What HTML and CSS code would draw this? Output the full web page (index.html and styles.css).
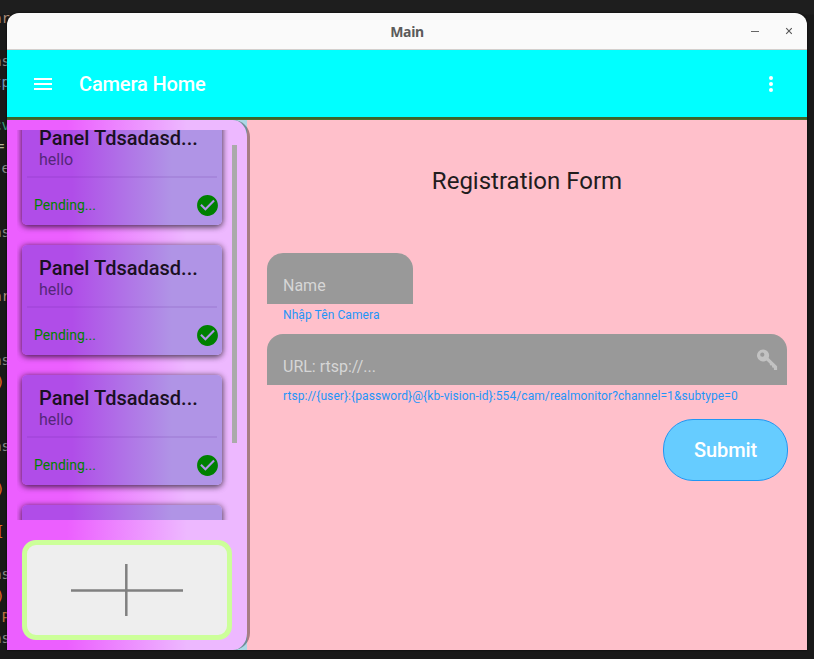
FILE: index.html
```html
<!DOCTYPE html>
<html lang="vi">
<head>
<meta charset="utf-8">
<title>Main</title>
<link rel="stylesheet" href="styles.css">
</head>
<body>
<div class="desktop">
  <div class="editor">
    <div class="tan">ar</div><div></div><div>as</div><div class="blue">tp</div><div></div><div class="green">cv</div><div class="cream">=</div><div> e</div><div></div><div></div><div>as</div><div></div><div></div><div class="tan">ar</div><div></div><div></div><div>as</div><div class="orange">)</div><div></div><div></div><div>as</div><div></div><div class="orange">)</div><div></div><div class="orange">[</div><div></div><div>as</div><div class="orange">)</div><div class="quote">'P</div><div>as</div>
  </div>
  <main class="window">
    <header class="titlebar">
      <span></span><strong>Main</strong>
      <div class="controls">
        <svg width="8" height="8" viewBox="0 0 8 8"><path d="M0 4.500h8" stroke="#666" fill="none"/></svg>
        <svg width="8" height="8" viewBox="0 0 8 8"><path d="M1.200 1.200l5.600 5.600M6.800 1.200L1.200 6.800" stroke="#555" stroke-width="1.100" fill="none"/></svg>
      </div>
    </header>
    <nav class="toolbar">
      <svg width="24" height="24" viewBox="0 0 24 24" fill="#fff"><path d="M3 18h18v-2H3v2zm0-5h18v-2H3v2zm0-7v2h18V6H3z"/></svg>
      <h1>Camera Home</h1>
      <svg width="24" height="24" viewBox="0 0 24 24" fill="#fff"><circle cx="12" cy="6" r="2"/><circle cx="12" cy="12" r="2"/><circle cx="12" cy="18" r="2"/></svg>
    </nav>
    <div class="content">
      <div class="rail">
        <aside class="sidebar">
          <div class="list">
            <div class="cards">
              <article class="card"><h2>Panel Tdsadasd...</h2><p>hello</p><hr><footer><span>Pending...</span><svg width="25" height="25" viewBox="0 0 24 24" fill="#008000"><path d="M12 2C6.480 2 2 6.480 2 12s4.480 10 10 10 10-4.480 10-10S17.520 2 12 2zm-2 15l-5-5 1.410-1.410L10 14.170l7.590-7.590L19 8l-9 9z"/></svg></footer></article>
              <article class="card"><h2>Panel Tdsadasd...</h2><p>hello</p><hr><footer><span>Pending...</span><svg width="25" height="25" viewBox="0 0 24 24" fill="#008000"><path d="M12 2C6.480 2 2 6.480 2 12s4.480 10 10 10 10-4.480 10-10S17.520 2 12 2zm-2 15l-5-5 1.410-1.410L10 14.170l7.590-7.590L19 8l-9 9z"/></svg></footer></article>
              <article class="card"><h2>Panel Tdsadasd...</h2><p>hello</p><hr><footer><span>Pending...</span><svg width="25" height="25" viewBox="0 0 24 24" fill="#008000"><path d="M12 2C6.480 2 2 6.480 2 12s4.480 10 10 10 10-4.480 10-10S17.520 2 12 2zm-2 15l-5-5 1.410-1.410L10 14.170l7.590-7.590L19 8l-9 9z"/></svg></footer></article>
              <article class="card"></article>
            </div>
            <div class="scrollbar"></div>
          </div>
          <button class="add" aria-label="+"><svg width="112" height="52" viewBox="0 0 112 52"><path d="M0 26.500h112M55.300 0v52" stroke="#808080" stroke-width="2.500" fill="none"/></svg></button>
        </aside>
      </div>
      <section class="form">
        <h2>Registration Form</h2>
        <div class="field name">Name</div>
        <p class="hint">Nhập Tên Camera</p>
        <div class="field url"><span>URL: rtsp://...</span>
          <svg width="22" height="23" viewBox="0 0 22 23"><path fill="#c2c2c2" fill-rule="evenodd" d="M7 1.500a6 6 0 1 0 2.400 11.500l1.100-.6 3.200 3.200.3 1.600 1.900.3.300 1.900 1.600.3.200 2.300h3.100v-3.800L12.600 9.900A6 6 0 0 0 7 1.500zM6.300 4.600a2.100 2.100 0 1 1 0 4.200 2.100 2.100 0 0 1 0-4.200z"/></svg>
        </div>
        <p class="hint">rtsp://{user}:{password}@{kb-vision-id}:554/cam/realmonitor?channel=1&amp;subtype=0</p>
        <button class="submit">Submit</button>
      </section>
    </div>
  </main>
</div>
</body>
</html>
```
FILE: styles.css
```css
* { box-sizing: border-box; }
body { margin: 0; background: #1e1e1e; font-family: Roboto, sans-serif; }
h1, h2, p { margin: 0; font-weight: 400; }
svg { display: block; flex: none; }
button { padding: 0; font-family: inherit; }
.desktop { width: 814px; height: 659px; display: flex; overflow: hidden; background: linear-gradient(#1e1e1e 14px, #191919 15px); }
.editor { width: 10px; flex: none; margin-right: -3px; padding-top: 8px; overflow: hidden; display: flex; flex-direction: column; align-items: flex-end; font: 14px/21.4px "DejaVu Sans Mono", monospace; color: #8a8a8a; }
.editor div { height: 21.4px; flex: none; white-space: pre; }
.editor .blue { color: #6d98b5; }
.editor .green { color: #39967d; }
.editor .cream { color: #b5b197; padding-right: 5.500px; }
.editor .tan { color: #a98c79; }
.editor .orange { color: #e06a20; padding-right: 5.500px; }
.editor .quote { color: #b8703d; }
.window { position: relative; width: 800px; height: 637px; margin-top: 13px; border-radius: 12px 12px 0 0; overflow: hidden; display: flex; flex-direction: column; box-shadow: 0 0 2px #000; }
.titlebar { height: 37px; flex: none; background: #fafafa; border-bottom: 1px solid #d4cfcc; display: grid; grid-template-columns: 1fr auto 1fr; align-items: center; font: 15px "Noto Sans", sans-serif; color: #5b5b5b; }
.titlebar strong { font-size: 14px; font-weight: 700; letter-spacing: -.3px; }
.controls { display: flex; justify-content: flex-end; gap: 26px; padding-right: 14px; }
.toolbar { height: 67px; flex: none; background: #0ff; display: flex; align-items: center; padding: 0 24px; }
.toolbar h1 { flex: 1; margin-left: 24px; font-size: 20px; font-weight: 500; letter-spacing: -.13px; color: #fff; }
.content { flex: 1; display: flex; border-top: 3px solid #47752f; border-image: linear-gradient(#3d632c 0 2px, #4d8030 3px) 3; background: #ffc0cb; }
.rail { width: 243px; background: linear-gradient(90deg, #add8e6 240px, #ffc0cb 240px); }
.sidebar { width: 243px; height: 530px; border-right: 3px solid rgba(0,0,0,.35); border-radius: 0 17px 17px 0; background: linear-gradient(90deg, #ec5fff 25%, #edb8ff 75%) padding-box; padding: 10px 0 0 10px; }
.list { width: 220px; height: 390px; overflow: hidden; display: flex; }
.cards { width: 215px; margin-top: -15px; padding-left: 5px; display: flex; flex-direction: column; gap: 20px; }
.card { width: 200px; height: 110px; flex: none; border-radius: 5px; background: linear-gradient(90deg, #b04de8 25%, #b094e6 75%); box-shadow: 0 1px 6px rgba(0,0,0,.55), 0 2px 6px rgba(0,0,0,.35); padding: 11px 5px 0; }
.card h2 { padding-left: 12px; font-size: 20px; line-height: 24px; font-weight: 500; color: #1a1022; white-space: nowrap; }
.card p { padding-left: 12px; font-size: 16px; line-height: 19px; color: #55277a; }
.card hr { height: 2px; margin: 7px 0 0; border: 0; background: rgba(80,20,140,.1); }
.card footer { display: flex; justify-content: space-between; align-items: center; padding-left: 7px; margin: 15px -3px 0 0; font-size: 14px; color: #008000; }
.card footer span { margin-top: -2px; }
.scrollbar { width: 5px; height: 298px; margin-top: 15px; background: #aaa; }
.add { width: 209.500px; height: 100px; margin: 20px 0 0 5px; border: 5px solid #cf9; border-radius: 14px; background: #eee; display: flex; align-items: center; justify-content: center; }
.form { flex: 1; padding: 0 20px 0 17px; }
.form h2 { margin-top: 46px; font-size: 24px; line-height: 30px; text-align: center; color: #221c1d; }
.field { height: 51px; border-radius: 16px 16px 0 0; background: #999; color: #d6d6d6; font-size: 16px; line-height: 19px; padding: 23px 9px 0 16px; }
.name { width: 145.500px; margin-top: 57px; }
.url { display: flex; justify-content: space-between; margin-top: 11px; }
.url svg { margin-top: -9px; }
.hint { height: 19px; padding: 3px 0 0 16px; font-size: 12px; line-height: 16px; letter-spacing: .08px; color: #1e95f8; }
.submit { width: 125px; height: 62px; margin: 15px -1px 0 auto; display: block; border: 1px solid #2196f3; border-radius: 30px; background: #6cf; color: #fff; font-size: 20px; font-weight: 500; letter-spacing: -.1px; }
```
